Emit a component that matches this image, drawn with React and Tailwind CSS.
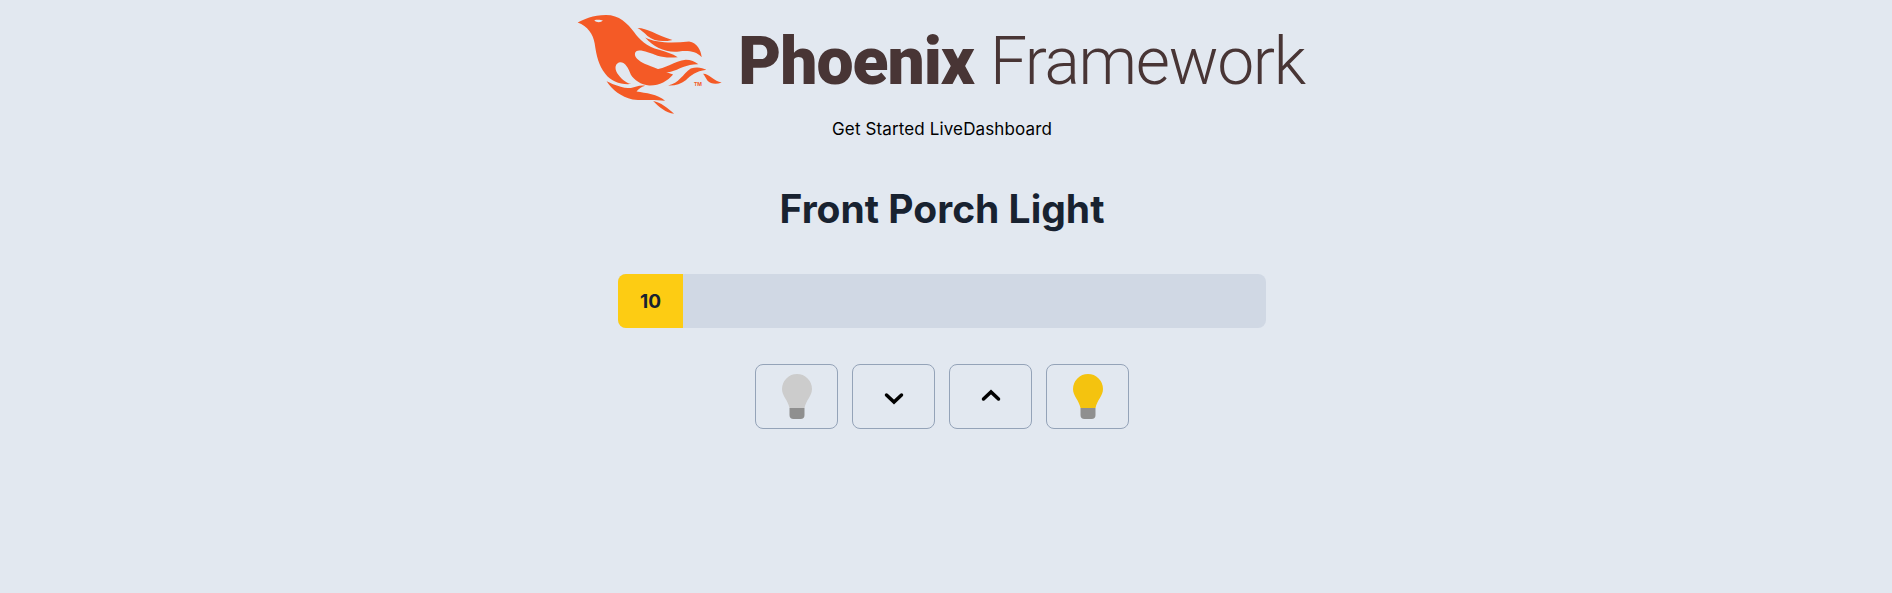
const Bulb = ({ color }) => (
  <svg width="30" height="45" viewBox="0 0 30 45" aria-hidden="true">
    <path d="M15 0A15 15 0 0 1 30 15C30 22 24 26 22.5 34H7.5C6 26 0 22 0 15A15 15 0 0 1 15 0Z" fill={color} />
    <path d="M7.5 34H22.5V41A4 4 0 0 1 18.5 45H11.5A4 4 0 0 1 7.5 41Z" fill="#8f8f8f" />
  </svg>
);

const Chevron = ({ d }) => (
  <svg width="24" height="24" viewBox="0 0 24 24" fill="none" stroke="#000" strokeWidth="3.5" strokeLinecap="round" strokeLinejoin="miter" aria-hidden="true">
    <path d={d} />
  </svg>
);

const Logo = () => (
  <svg width="148" height="102" viewBox="50 40 445 305" fill="#f45a26" className="shrink-0" aria-hidden="true">
    <path d="M55 68C75 58 100 45 140 45C180 45 205 70 225 97C240 118 262 140 300 150C320 156 340 162 356 172C335 174 315 174 295 168C275 160 255 152 240 152C228 152 224 162 230 172C238 184 258 193 285 203C305 212 325 218 342 224C325 244 300 258 270 257C245 256 225 240 215 225C208 205 198 186 182 187C168 190 165 205 174 220C184 235 198 248 216 253C185 256 155 245 138 222C118 195 112 170 106 130C102 105 85 78 55 68Z" />
    <path fill="#e2e8f0" d="M105 61C112 59 124 59 131 62C126 67 113 70 105 61Z" />
    <path d="M235 84C265 84 290 105 340 120C310 127 285 124 265 108C255 98 245 90 235 84Z" />
    <path d="M258 113C290 130 340 130 390 125C415 130 425 150 428 172C410 153 385 152 360 155C320 159 285 144 258 113Z" />
    <path d="M285 209C320 208 345 184 380 180C395 180 408 186 418 193C385 192 360 208 335 216C315 221 300 217 285 209Z" />
    <path d="M327 257C360 250 370 224 395 206C415 200 430 204 442 210C410 214 395 228 380 241C365 252 345 259 327 257Z" />
    <path d="M432 222C450 221 465 245 488 248C470 255 455 252 445 242C440 234 436 227 432 222Z" />
    <path d="M142 244C165 255 190 265 215 265C230 262 240 255 258 258C245 262 238 268 232 275C260 280 295 282 318 303C280 298 250 303 220 299C185 291 160 270 142 244Z" />
    <path d="M282 304C305 308 325 325 345 342C320 340 300 322 282 304Z" />
    <text x="405" y="259" fontSize="15" fontWeight="700" fontFamily="Inter, sans-serif">TM</text>
  </svg>
);

export default function App() {
  return (
    <div className="min-h-[593px] bg-[#e2e8f0] pr-2 font-['Inter',sans-serif] text-black">
      <header className="flex flex-col items-center">
        <div className="mr-[3px] flex h-[117px] items-start pt-[13px]">
          <Logo />
          <div className="ml-[14px] mt-[11px] flex items-baseline whitespace-nowrap font-['Roboto',sans-serif] text-[66px] leading-[76px] text-[#483535]">
            <span className="font-black tracking-[-1px]">Phoenix</span>
            <span className="ml-[16px] font-light tracking-[-1.3px]">Framework</span>
          </div>
        </div>
        <nav className="flex h-6 items-center gap-[5px] text-[17px] leading-6 tracking-[0.12px]">
          <a href="#started">Get Started</a>
          <a href="#dashboard">LiveDashboard</a>
        </nav>
      </header>
      <main className="flex flex-col items-center pt-[48px]">
        <h1 className="text-[39px] leading-10 font-[750] text-[#182230]">Front Porch Light</h1>
        <div className="mt-[45px] h-[54px] w-[648px] overflow-hidden rounded-lg bg-[#d0d8e4]">
          <div className="flex h-full w-[65px] items-center justify-center bg-[#fdcc13] pt-[3px] text-[19px] font-bold text-[#182230]">
            10
          </div>
        </div>
        <div className="mt-9 flex gap-[14px]">
          <button className="flex h-[65px] w-[83px] items-center justify-center rounded-lg border border-[#94a3b8]"><Bulb color="#cccccc" /></button>
          <button className="flex h-[65px] w-[83px] items-center justify-center rounded-lg border border-[#94a3b8]"><Chevron d="M4.5 10L12 17L19.5 10" /></button>
          <button className="flex h-[65px] w-[83px] items-center justify-center rounded-lg border border-[#94a3b8]"><Chevron d="M4.5 14L12 7L19.5 14" /></button>
          <button className="flex h-[65px] w-[83px] items-center justify-center rounded-lg border border-[#94a3b8]"><Bulb color="#f4c30f" /></button>
        </div>
      </main>
    </div>
  );
}
